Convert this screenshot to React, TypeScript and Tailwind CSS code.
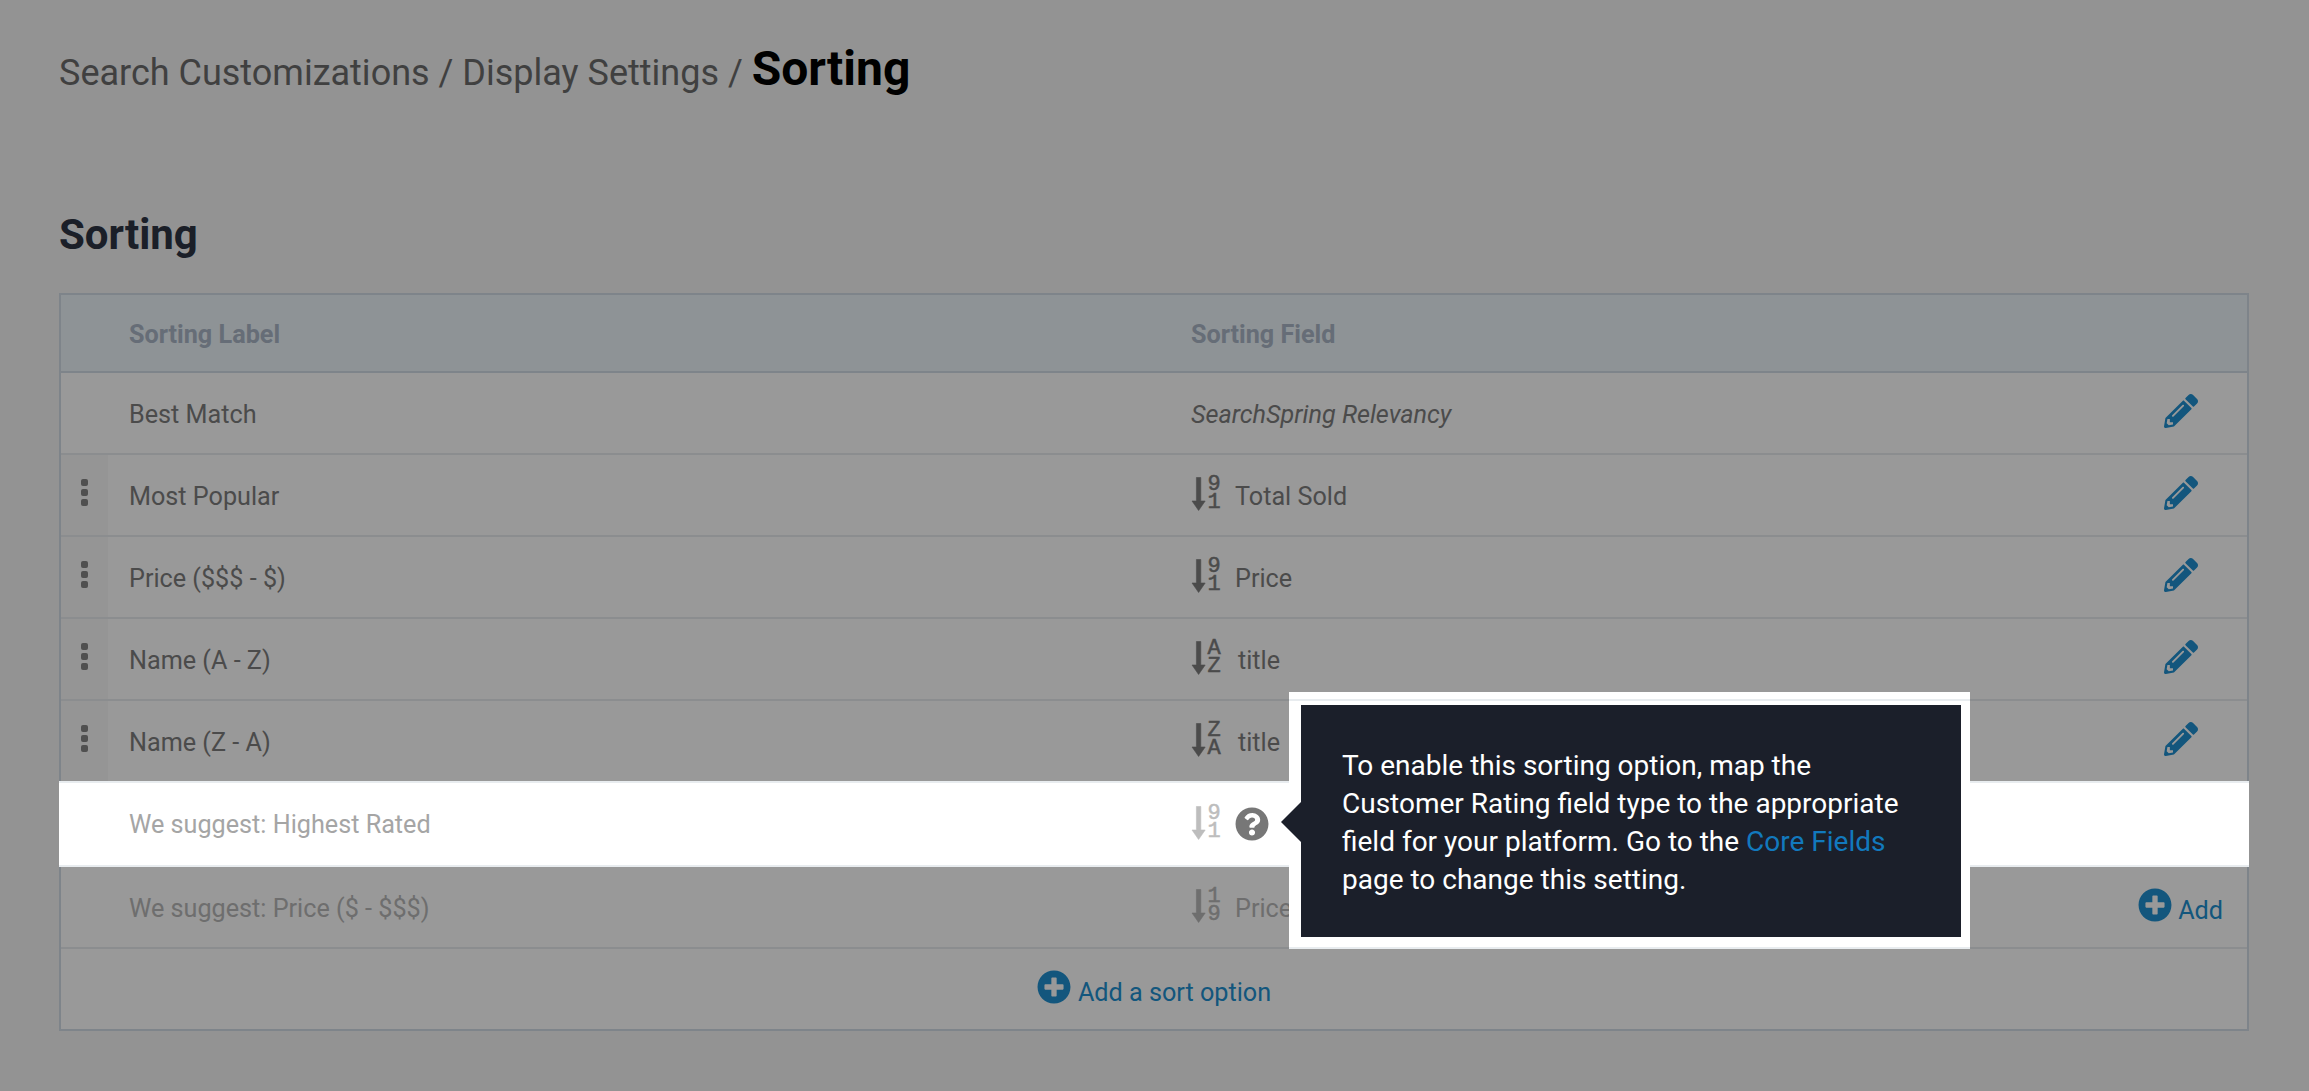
import React from 'react';
import { FaPencilAlt, FaPlusCircle, FaQuestionCircle } from 'react-icons/fa';

type Row = {
  label: string;
  field: string;
  top: string;
  bottom: string;
  gap: string;
};

const rows: Row[] = [
  { label: 'Most Popular', field: 'Total Sold', top: '9', bottom: '1', gap: 'ml-[13px]' },
  { label: 'Price ($$$ - $)', field: 'Price', top: '9', bottom: '1', gap: 'ml-[13px]' },
  { label: 'Name (A - Z)', field: 'title', top: 'A', bottom: 'Z', gap: 'ml-[16px]' },
  { label: 'Name (Z - A)', field: 'title', top: 'Z', bottom: 'A', gap: 'ml-[16px]' },
];

// down arrow with the two sort characters stacked next to it
const SortIcon = ({ top, bottom }: { top: string; bottom: string }) => (
  <div className="mb-[3px] flex items-center shrink-0">
    <svg viewBox="0 0 15 34" className="w-[15px] h-[34px]" fill="currentColor">
      <path d="M5.4 0.5h4.4v23.5h4.4l-6.6 9.5L1 24h4.4z" strokeLinejoin="round" stroke="currentColor" strokeWidth="0.6" />
    </svg>
    <div
      className="flex w-[16px] flex-col items-center text-[22px] [-webkit-text-stroke:0.5px_currentColor]"
      style={{ fontFamily: '"Liberation Mono", monospace' }}
    >
      <span className="h-[18px] leading-[18px]">{top}</span>
      <span className="h-[18px] leading-[18px]">{bottom}</span>
    </div>
  </div>
);

const Handle = () => (
  <div className="mb-[6px] flex flex-col gap-[3px]">
    <div className="w-[7px] h-[7px] rounded-[2px] bg-[#858585]" />
    <div className="w-[7px] h-[7px] rounded-[2px] bg-[#858585]" />
    <div className="w-[7px] h-[7px] rounded-[2px] bg-[#858585]" />
  </div>
);

const Pencil = () => (
  <div className="mr-[49px] mb-[4px] text-[#2090d0]">
    <FaPencilAlt className="w-[34px] h-[34px]" />
  </div>
);

export default function App() {
  return (
    <div
      className="relative min-h-[1091px] overflow-hidden bg-[#f5f5f5] pl-[59px] pr-[60px] pt-[33px] text-[25.2px] text-[#7d7d7d]"
      style={{ fontFamily: 'Roboto, sans-serif' }}
    >
      <h1 className="flex items-baseline h-[60px] text-[36px] text-[#6c6c6c]">
        <span className="whitespace-pre">Search Customizations / Display Settings / </span>
        <span className="text-[48px] font-bold text-black">Sorting</span>
      </h1>

      <h2 className="mt-[117px] h-[49px] leading-[49px] text-[42px] font-bold text-[#2d3443]">Sorting</h2>

      <div className="mt-[34px] border-2 border-[#d2dde6]">
        <div className="flex items-center h-[78px] border-b-2 border-[#d2dde6] bg-[#edf5fa] pt-[4px] font-bold text-[#aab6c6]">
          <div className="w-[1130px] pl-[68px]">Sorting Label</div>
          <div>Sorting Field</div>
        </div>

        <div className="flex items-center h-[82px] border-b-2 border-[#e8ecef] bg-white">
          <div className="w-[1130px] pl-[68px] pt-[3px]">Best Match</div>
          <div className="italic pt-[3px]">SearchSpring Relevancy</div>
          <div className="ml-auto"><Pencil /></div>
        </div>

        {rows.map((row, i) => (
          <div
            key={row.label}
            className={
              i === rows.length - 1
                ? 'flex items-stretch h-[80px] bg-white'
                : 'flex items-stretch h-[82px] border-b-2 border-[#e8ecef] bg-white'
            }
          >
            <div className="flex w-[47px] items-center justify-center bg-[#f9f9f9]">
              <Handle />
            </div>
            <div className="flex w-[1083px] items-center pl-[21px] pt-[3px]">{row.label}</div>
            <div className="flex flex-1 items-center">
              <SortIcon top={row.top} bottom={row.bottom} />
              <span className={row.gap + ' pt-[3px]'}>{row.field}</span>
              <div className="ml-auto"><Pencil /></div>
            </div>
          </div>
        ))}

        {/* highlighted row sits above the dimmed page */}
        <div className="relative z-20 -mx-[2px] flex items-center h-[86px] border-y-2 border-[#e8ecef] bg-white text-[#a5a5a5]">
          <div className="w-[1132px] pl-[70px] pt-[2px]">We suggest: Highest Rated</div>
          <div className="flex text-[#bdbdbd]"><SortIcon top="9" bottom="1" /></div>
          <FaQuestionCircle className="ml-[13px] w-[34px] h-[34px] text-[#777777]" />
        </div>

        <div className="flex items-center h-[82px] border-b-2 border-[#e8ecef] bg-white text-[#b7b7b7]">
          <div className="w-[1130px] pl-[68px] pt-[3px]">We suggest: Price ($ - $$$)</div>
          <SortIcon top="1" bottom="9" />
          <span className="ml-[13px] pt-[3px]">Price</span>
          <div className="ml-auto mr-[24px] flex items-center text-[#2090d0]">
            <FaPlusCircle className="mb-[3px] w-[34px] h-[34px]" />
            <span className="ml-[6px] mt-[8px]">Add</span>
          </div>
        </div>

        <div className="flex items-center justify-center h-[80px] bg-white text-[#2090d0]">
          <FaPlusCircle className="mb-[4px] w-[34px] h-[34px]" />
          <span className="ml-[7px] mt-[8px]">Add a sort option</span>
        </div>
      </div>

      <div className="absolute inset-0 z-10 bg-black/40" />

      <div className="absolute left-[1289px] top-[692px] z-30 w-[681px] bg-white pt-[7px] text-white">
        <div className="border-y-2 border-[#e8ecef] pl-[12px] pr-[9px] pt-[4px] pb-[10px]">
          <div className="relative bg-[#1b1f2a] px-[41px] pt-[42px] pb-[38px] text-[28px] leading-[38px]">
            <div className="absolute left-[-20px] top-[97px] border-y-[20px] border-r-[20px] border-y-transparent border-r-[#1b1f2a]" />
            To enable this sorting option, map the Customer Rating field type to the appropriate field for your platform. Go to the{' '}
            <span className="text-[#1279bd]">Core Fields</span> page to change this setting.
          </div>
        </div>
      </div>
    </div>
  );
}
